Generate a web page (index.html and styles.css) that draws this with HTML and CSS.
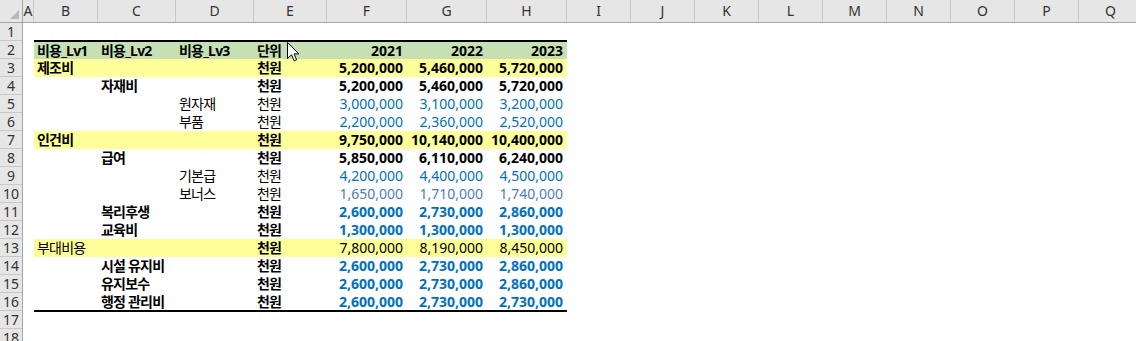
FILE: index.html
```html
<!DOCTYPE html>
<html lang="ko">
<head>
<meta charset="utf-8">
<title>Sheet</title>
<link rel="stylesheet" href="styles.css">
</head>
<body>
<div class="sheet">
  <div class="colhdr">
    <div class="corner"><span class="tri"></span></div>
    <div class="ch w-a">A</div>
    <div class="ch w-b">B</div>
    <div class="ch w-c">C</div>
    <div class="ch w-d">D</div>
    <div class="ch w-e">E</div>
    <div class="ch w-f">F</div>
    <div class="ch w-f">G</div>
    <div class="ch w-f">H</div>
    <div class="ch w-x">I</div>
    <div class="ch w-x">J</div>
    <div class="ch w-x">K</div>
    <div class="ch w-x">L</div>
    <div class="ch w-x">M</div>
    <div class="ch w-x">N</div>
    <div class="ch w-x">O</div>
    <div class="ch w-x">P</div>
    <div class="ch w-x">Q</div>
  </div>
  <div class="body">
    <div class="rowhdr">
      <div class="rh">1</div><div class="rh">2</div><div class="rh">3</div><div class="rh">4</div>
      <div class="rh">5</div><div class="rh">6</div><div class="rh">7</div><div class="rh">8</div>
      <div class="rh">9</div><div class="rh">10</div><div class="rh">11</div><div class="rh">12</div>
      <div class="rh">13</div><div class="rh">14</div><div class="rh">15</div><div class="rh">16</div>
      <div class="rh">17</div><div class="rh">18</div>
    </div>
    <div class="cells">
      <div class="spacer-top"></div>
      <div class="table">
        <div class="row head b">
          <div class="c">비용_Lv1</div><div class="c">비용_Lv2</div><div class="c">비용_Lv3</div><div class="c">단위</div>
          <div class="c n">2021</div><div class="c n">2022</div><div class="c n">2023</div>
        </div>
        <div class="row sum b">
          <div class="c">제조비</div><div class="c"></div><div class="c"></div><div class="c">천원</div>
          <div class="c n">5,200,000</div><div class="c n">5,460,000</div><div class="c n">5,720,000</div>
        </div>
        <div class="row b">
          <div class="c"></div><div class="c">자재비</div><div class="c"></div><div class="c">천원</div>
          <div class="c n">5,200,000</div><div class="c n">5,460,000</div><div class="c n">5,720,000</div>
        </div>
        <div class="row">
          <div class="c"></div><div class="c"></div><div class="c">원자재</div><div class="c">천원</div>
          <div class="c n blue">3,000,000</div><div class="c n blue">3,100,000</div><div class="c n blue">3,200,000</div>
        </div>
        <div class="row">
          <div class="c"></div><div class="c"></div><div class="c">부품</div><div class="c">천원</div>
          <div class="c n blue">2,200,000</div><div class="c n blue">2,360,000</div><div class="c n blue">2,520,000</div>
        </div>
        <div class="row sum b">
          <div class="c">인건비</div><div class="c"></div><div class="c"></div><div class="c">천원</div>
          <div class="c n">9,750,000</div><div class="c n">10,140,000</div><div class="c n">10,400,000</div>
        </div>
        <div class="row b">
          <div class="c"></div><div class="c">급여</div><div class="c"></div><div class="c">천원</div>
          <div class="c n">5,850,000</div><div class="c n">6,110,000</div><div class="c n">6,240,000</div>
        </div>
        <div class="row">
          <div class="c"></div><div class="c"></div><div class="c">기본급</div><div class="c">천원</div>
          <div class="c n blue">4,200,000</div><div class="c n blue">4,400,000</div><div class="c n blue">4,500,000</div>
        </div>
        <div class="row">
          <div class="c"></div><div class="c"></div><div class="c">보너스</div><div class="c">천원</div>
          <div class="c n muted">1,650,000</div><div class="c n muted">1,710,000</div><div class="c n muted">1,740,000</div>
        </div>
        <div class="row b">
          <div class="c"></div><div class="c">복리후생</div><div class="c"></div><div class="c">천원</div>
          <div class="c n blue">2,600,000</div><div class="c n blue">2,730,000</div><div class="c n blue">2,860,000</div>
        </div>
        <div class="row b">
          <div class="c"></div><div class="c">교육비</div><div class="c"></div><div class="c">천원</div>
          <div class="c n blue">1,300,000</div><div class="c n blue">1,300,000</div><div class="c n blue">1,300,000</div>
        </div>
        <div class="row sum">
          <div class="c">부대비용</div><div class="c"></div><div class="c"></div><div class="c b">천원</div>
          <div class="c n">7,800,000</div><div class="c n">8,190,000</div><div class="c n">8,450,000</div>
        </div>
        <div class="row b">
          <div class="c"></div><div class="c">시설 유지비</div><div class="c"></div><div class="c">천원</div>
          <div class="c n blue">2,600,000</div><div class="c n blue">2,730,000</div><div class="c n blue">2,860,000</div>
        </div>
        <div class="row b">
          <div class="c"></div><div class="c">유지보수</div><div class="c"></div><div class="c">천원</div>
          <div class="c n blue">2,600,000</div><div class="c n blue">2,730,000</div><div class="c n blue">2,860,000</div>
        </div>
        <div class="row b last">
          <div class="c"></div><div class="c">행정 관리비</div><div class="c"></div><div class="c">천원</div>
          <div class="c n blue">2,600,000</div><div class="c n blue">2,730,000</div><div class="c n blue">2,730,000</div>
        </div>
      </div>
    </div>
  </div>
  <svg class="cursor" width="13" height="20" viewBox="0 0 13 20" aria-hidden="true">
    <path d="M0.5 0.5 V16.5 L4.5 12.8 L7.2 18.8 L9.6 17.8 L7.1 11.9 H12 Z" fill="#fff" stroke="#000" stroke-width="1" stroke-linejoin="miter"/>
  </svg>
</div>
</body>
</html>
```

FILE: styles.css
```css
html, body {
  margin: 0;
  padding: 0;
  background: #fff;
  overflow: hidden;
}

.sheet {
  position: relative;
  width: 1136px;
  height: 341px;
  overflow: hidden;
  font-family: "Noto Sans", "Noto Sans CJK KR", sans-serif;
}

/* column header */
.colhdr {
  display: flex;
  height: 23px;
  box-sizing: border-box;
  background: #e6e6e6;
  border-bottom: 1px solid #a6a6a6;
}
.corner {
  position: relative;
  flex: 0 0 23px;
  box-sizing: border-box;
  border-right: 1px solid #a6a6a6;
}
.tri {
  position: absolute;
  right: 3px;
  bottom: 3px;
  width: 0;
  height: 0;
  border-left: 9px solid transparent;
  border-bottom: 9px solid #b9b9b9;
}
.ch {
  flex: 0 0 auto;
  box-sizing: border-box;
  border-right: 1px solid #c8c8c8;
  display: flex;
  align-items: center;
  justify-content: center;
  font-size: 14px;
  line-height: 22px;
  color: #333;
}
.w-a { width: 11px; }
.w-b { width: 64px; }
.w-c { width: 78px; }
.w-d { width: 78px; }
.w-e { width: 73px; }
.w-f { width: 80px; }
.w-x { width: 64px; }

/* body */
.body {
  display: flex;
}
.rowhdr {
  flex: 0 0 23px;
  display: flex;
  flex-direction: column;
  background: #e6e6e6;
  box-sizing: border-box;
  border-right: 1px solid #a6a6a6;
}
.rh {
  height: 18px;
  box-sizing: border-box;
  border-bottom: 1px solid #c8c8c8;
  font-size: 14px;
  line-height: 17px;
  text-align: center;
  color: #333;
}

.cells {
  flex: 1;
  padding-left: 11px;
}
.spacer-top {
  height: 17px;
}
.table {
  width: 533px;
  border-top: 2px solid #000;
  border-bottom: 2px solid #000;
}
.row {
  display: grid;
  grid-template-columns: 64px 78px 78px 73px 80px 80px 80px;
  height: 18px;
  font-size: 14px;
  color: #000;
}
.row.head {
  height: 17px;
  background: #c6e0b4;
}
.row.last {
  height: 17px;
}
.row.sum {
  background: #ffff99;
}
.b { font-weight: 700; }
.c {
  display: flex;
  align-items: center;
  padding: 0 3px;
  white-space: nowrap;
  overflow: visible;
  line-height: 18px;
  letter-spacing: -0.8px;
}
.c.n {
  justify-content: flex-end;
  padding-right: 4px;
  font-size: 14px;
  letter-spacing: 0;
}
.blue { color: #0070c0; }
.muted { color: #4a7ebf; }

.cursor {
  position: absolute;
  left: 287px;
  top: 42px;
}
```
